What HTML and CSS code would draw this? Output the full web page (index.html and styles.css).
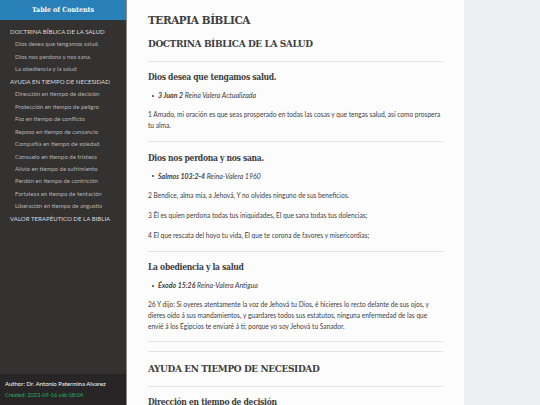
FILE: index.html
```html
<!DOCTYPE html>
<html lang="es">
<head>
<meta charset="utf-8">
<title>Terapia Bíblica</title>
<link rel="stylesheet" href="styles.css">
</head>
<body>
<div class="layout">
  <nav class="sidebar">
    <div class="toc-title">Table of Contents</div>
    <ul class="toc">
      <li class="top">DOCTRINA BÍBLICA DE LA SALUD</li>
      <li class="sub">Dios desea que tengamos salud.</li>
      <li class="sub">Dios nos perdona y nos sana.</li>
      <li class="sub">La obediencia y la salud</li>
      <li class="top">AYUDA EN TIEMPO DE NECESIDAD</li>
      <li class="sub">Dirección en tiempo de decisión</li>
      <li class="sub">Protección en tiempo de peligro</li>
      <li class="sub">Paz en tiempo de conflicto</li>
      <li class="sub">Reposo en tiempo de cansancio</li>
      <li class="sub">Compañía en tiempo de soledad</li>
      <li class="sub">Consuelo en tiempo de tristeza</li>
      <li class="sub">Alivio en tiempo de sufrimiento</li>
      <li class="sub">Perdón en tiempo de contrición</li>
      <li class="sub">Fortaleza en tiempo de tentación</li>
      <li class="sub">Liberación en tiempo de angustia</li>
      <li class="top">VALOR TERAPÉUTICO DE LA BIBLIA</li>
    </ul>
    <div class="postamble">
      <p class="author">Author: Dr. Antonio Patermina Alvarez</p>
      <p class="date">Created: 2023-09-16 sáb 08:04</p>
    </div>
  </nav>
  <main class="content">
    <h1 class="title">TERAPIA BÍBLICA</h1>
    <h2 class="h2">DOCTRINA BÍBLICA DE LA SALUD</h2>
    <hr class="rule">
    <h3 class="h3">Dios desea que tengamos salud.</h3>
    <ul class="refs"><li><b>3 Juan 2</b> Reina Valera Actualizada</li></ul>
    <p class="verse">1 Amado, mi oración es que seas prosperado en todas las cosas y que tengas salud, así como prospera tu alma.</p>
    <hr class="rule">
    <h3 class="h3">Dios nos perdona y nos sana.</h3>
    <ul class="refs"><li><b>Salmos 103:2-4</b> Reina-Valera 1960</li></ul>
    <p class="verse">2 Bendice, alma mía, a Jehová, Y no olvides ninguno de sus beneficios.</p>
    <p class="verse">3 Él es quien perdona todas tus iniquidades, El que sana todas tus dolencias;</p>
    <p class="verse">4 El que rescata del hoyo tu vida, El que te corona de favores y misericordias;</p>
    <hr class="rule">
    <h3 class="h3">La obediencia y la salud</h3>
    <ul class="refs"><li><b>Éxodo 15:26</b> Reina-Valera Antigua</li></ul>
    <p class="verse">26 Y dijo: Si oyeres atentamente la voz de Jehová tu Dios, é hicieres lo recto delante de sus ojos, y dieres oído á sus mandamientos, y guardares todos sus estatutos, ninguna enfermedad de las que envié á los Egipcios te enviaré á ti; porque yo soy Jehová tu Sanador.</p>
    <hr class="rule pre">
    <hr class="rule tight">
    <h2 class="h2 big">AYUDA EN TIEMPO DE NECESIDAD</h2>
    <hr class="rule">
    <h3 class="h3">Dirección en tiempo de decisión</h3>
  </main>
</div>
</body>
</html>
```

FILE: styles.css
```css
html, body {
  margin: 0;
  padding: 0;
  height: 100%;
  overflow: hidden;
  background: #edf0f2;
}
body {
  font-family: Lato, "Open Sans", sans-serif;
  color: #404040;
}
.layout {
  display: flex;
  height: 405px;
}
.sidebar {
  width: 126px;
  flex: none;
  background: #343131;
  border-right: 1px solid #8a8888;
  display: flex;
  flex-direction: column;
}
.toc-title {
  background: #2980b9;
  color: #fff;
  font-family: "DejaVu Serif Condensed", "DejaVu Serif", serif;
  font-stretch: condensed;
  font-weight: bold;
  font-size: 7px;
  height: 20px;
  line-height: 20px;
  text-align: center;
}
.toc {
  list-style: none;
  margin: 0;
  padding: 6px 0 0 0;
  flex: 1;
  line-height: 12.45px;
}
.toc .top {
  padding-left: 10px;
  color: #d9d9d9;
  font-size: 6.1px;
}
.toc .sub {
  padding-left: 15px;
  color: #b3b3b3;
  font-size: 6px;
}
.postamble {
  background: #272525;
  height: 31px;
  padding: 5px 0 0 5px;
  box-sizing: border-box;
  line-height: 10.5px;
}
.postamble p {
  margin: 0;
}
.author { color: #fcfcfc; font-size: 6px; }
.date { color: #27ae60; font-size: 5.6px; }

.content {
  width: 295px;
  flex: none;
  background: #fcfcfc;
  padding: 10.5px 21px 0 21px;
}
.title, .h2, .h3 {
  font-family: "DejaVu Serif Condensed", "DejaVu Serif", serif;
  font-stretch: condensed;
  font-weight: bold;
}
.title {
  font-size: 11.6px;
  letter-spacing: -0.4px;
  line-height: 18px;
  margin: 0 0 8px 0;
}
.h2 {
  font-size: 10px;
  letter-spacing: -0.4px;
  line-height: 14px;
  margin: 0;
}
.h2.big {
  margin-top: 10px;
}
.h3 {
  font-size: 8.5px;
  letter-spacing: -0.3px;
  line-height: 12px;
  margin: 0 0 7px 0;
}
.rule {
  border: 0;
  border-top: 1px solid #e1e4e5;
  height: 0;
  margin: 10px 0 9.5px 0;
}
.rule.pre {
  margin-top: 9px;
  margin-bottom: 0;
}
.rule.tight {
  margin-top: 8.5px;
}
.refs {
  list-style: none;
  margin: 0 0 9px 0;
  padding: 0 0 0 9px;
  font-size: 7px;
  line-height: 10px;
  font-style: italic;
}
.refs li::before {
  content: "";
  display: inline-block;
  width: 2px;
  height: 2px;
  border-radius: 50%;
  background: #404040;
  margin: 0 4px 1px -5px;
  vertical-align: middle;
}
.verse {
  font-size: 6.6px;
  line-height: 11px;
  margin: 0 0 9px 0;
}
```
